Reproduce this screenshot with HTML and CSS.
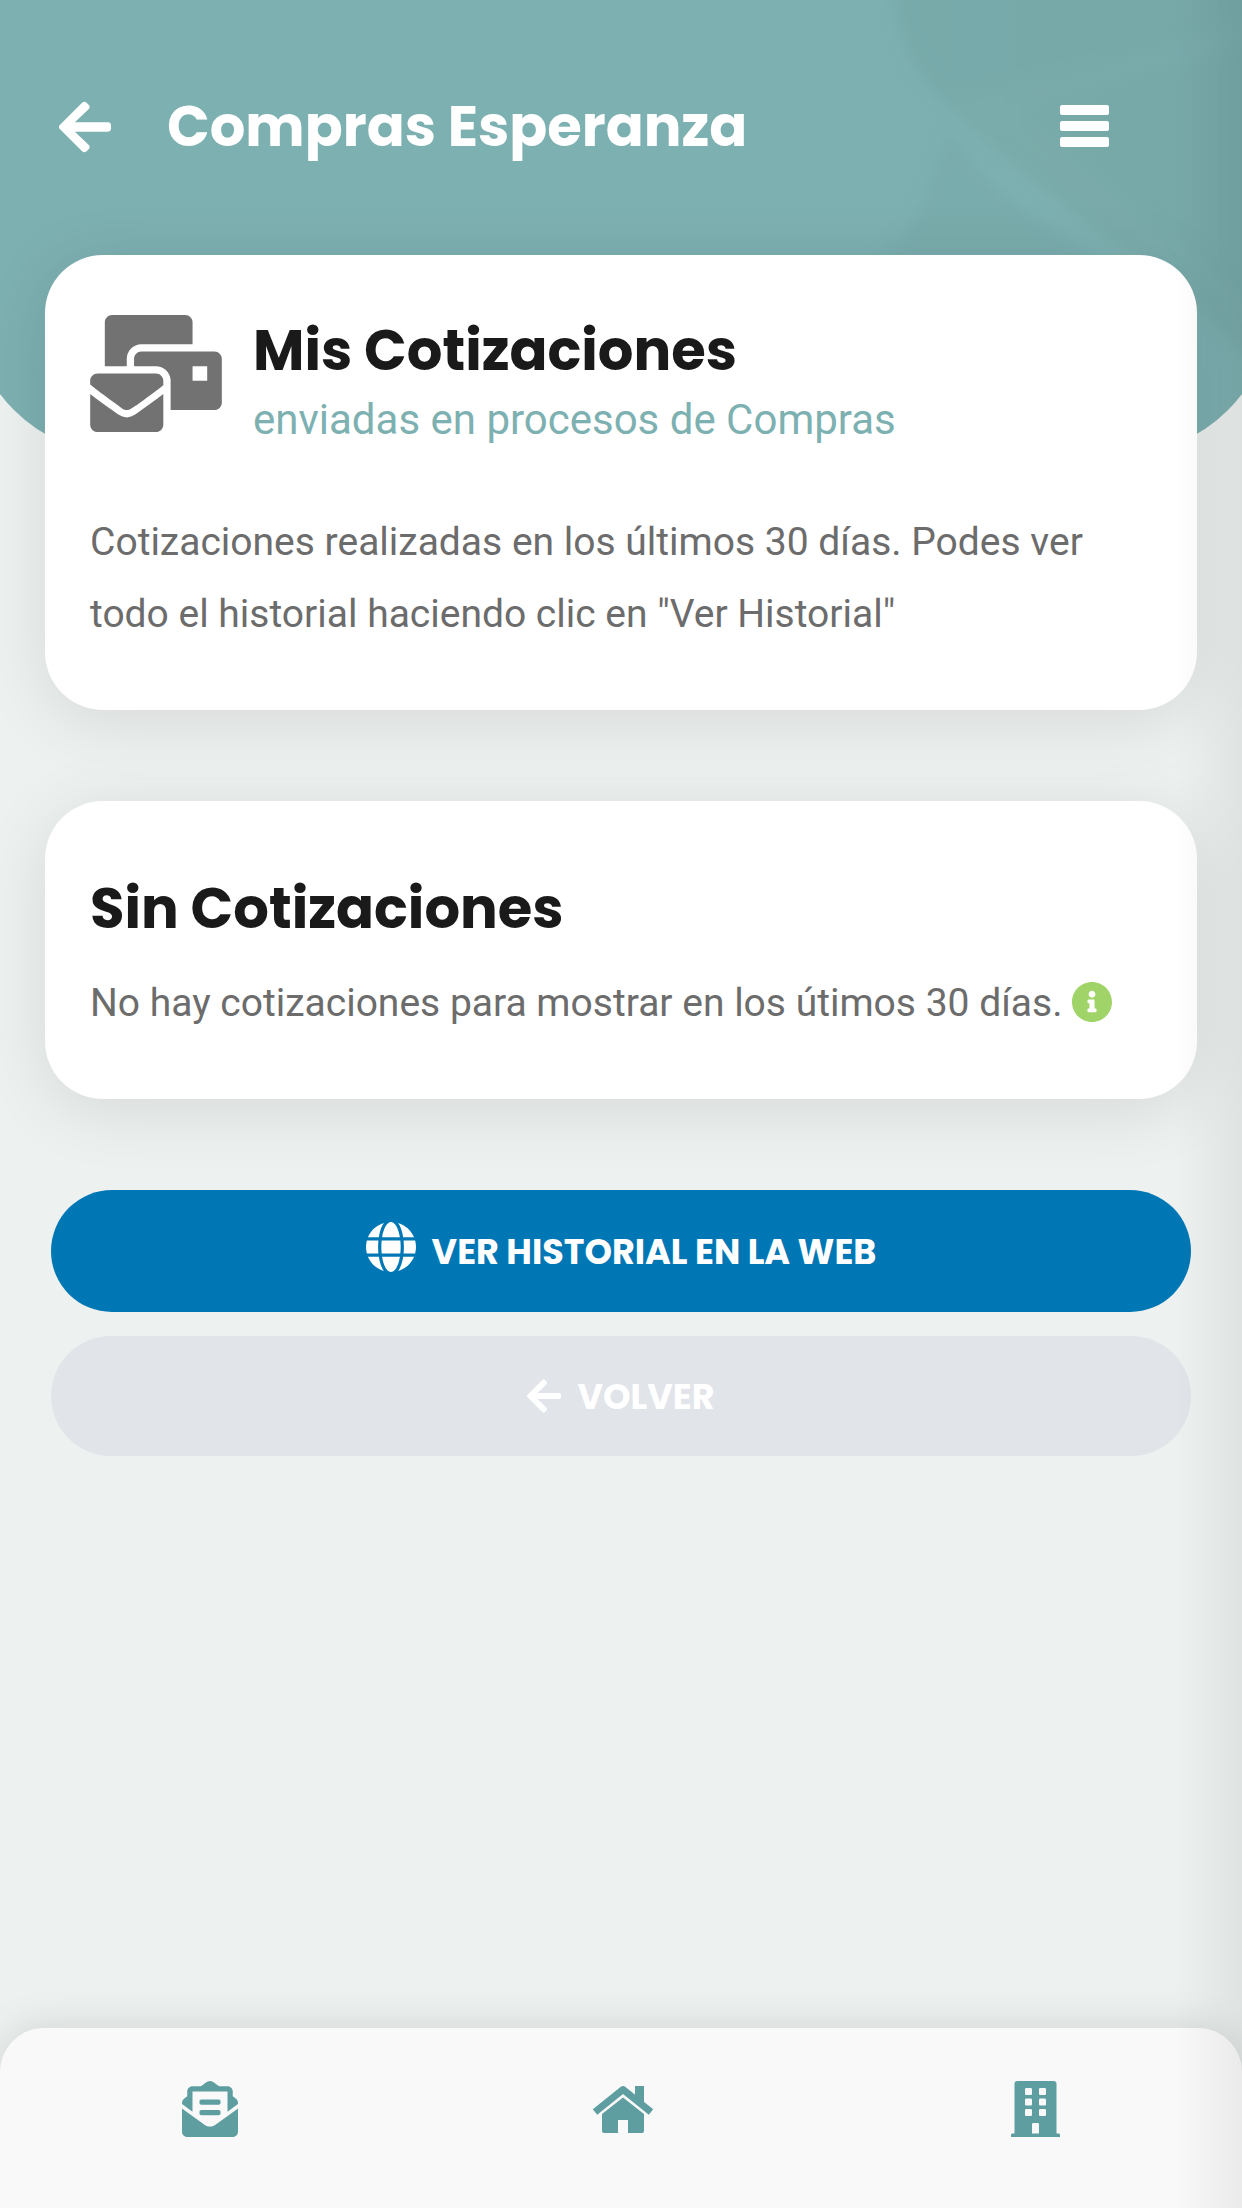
FILE: index.html
```html
<!DOCTYPE html>
<html lang="es">
<head>
<meta charset="utf-8">
<meta name="viewport" content="width=device-width, initial-scale=1">
<title>Compras Esperanza</title>
<link rel="stylesheet" href="styles.css">
</head>
<body>
<div class="page">
  <div class="hero" aria-hidden="true">
    <svg class="hero-art" viewBox="0 0 1302 454" preserveAspectRatio="none">
      <defs>
        <linearGradient id="edge" x1="0" x2="1"><stop offset="0" stop-color="#76a8a7"/><stop offset="1" stop-color="#74a5a4"/></linearGradient>
        <filter id="soft" x="-10%" y="-10%" width="120%" height="120%"><feGaussianBlur stdDeviation="7"/></filter>
      </defs>
      <g filter="url(#soft)">
        <path d="M922 -20C926 40 945 80 985 110C1040 165 1100 215 1180 265L1330 400V-20Z" fill="url(#edge)" opacity=".75"/>
        <path d="M980 95L1100 70L1302 10V40L1060 110L1302 320V350C1180 290 1080 230 980 95Z" fill="#7db0b0" opacity=".3"/>
        <path d="M980 130C1010 190 1070 220 1130 260H900C950 240 960 180 980 130Z" fill="#719f9e" opacity=".25"/>
      </g>
    </svg>
  </div>

  <header class="topbar">
    <a class="back" href="#" aria-label="Volver">
      <svg viewBox="0 0 448 512"><use href="#arrow"/></svg>
    </a>
    <h1 class="title">Compras Esperanza</h1>
    <button class="menu" type="button" aria-label="Menú">
      <svg viewBox="0 0 49 43"><rect width="49" height="10" rx="2"/><rect y="16" width="49" height="10" rx="2"/><rect y="32" width="49" height="10" rx="2"/></svg>
    </button>
  </header>

  <main class="content">
    <section class="card">
      <div class="card-head">
        <svg class="mail" viewBox="0 0 576 512"><path d="M160 448c-25.600 0-51.200-22.400-64-32-64-44.800-83.200-60.800-96-70.400V480c0 17.670 14.330 32 32 32h256c17.670 0 32-14.330 32-32V345.600c-12.800 9.600-32 25.600-96 70.400-12.800 9.600-38.400 32-64 32zm128-192H32c-17.670 0-32 14.330-32 32v16c25.600 19.200 22.400 19.200 115.200 86.400 9.600 6.400 28.800 25.600 44.800 25.600s35.200-19.200 44.800-22.400c92.800-67.200 89.600-67.200 115.200-86.400V288c0-17.670-14.330-32-32-32zm256-96H224c-17.670 0-32 14.330-32 32v32h96c33.210 0 60.590 25.420 63.710 57.820l.29-.22V416h192c17.670 0 32-14.330 32-32V192c0-17.670-14.330-32-32-32zm-32 128h-64v-64h64v64zm-352-96c0-35.290 28.710-64 64-64h224V32c0-17.670-14.330-32-32-32H96C78.330 0 64 14.330 64 32v192h96v-32z"/></svg>
        <div>
          <h2 class="heading">Mis Cotizaciones</h2>
          <p class="subheading">enviadas en procesos de Compras</p>
        </div>
      </div>
      <p class="text">Cotizaciones realizadas en los últimos 30 días. Podes ver todo el historial haciendo clic en "Ver Historial"</p>
    </section>

    <section class="card card-empty">
      <h2 class="heading">Sin Cotizaciones</h2>
      <p class="text">No hay cotizaciones para mostrar en los útimos 30 días. <svg class="info" viewBox="8 8 496 496"><path d="M256 8C119.043 8 8 119.083 8 256c0 136.997 111.043 248 248 248s248-111.003 248-248C504 119.083 392.957 8 256 8zm0 110c23.196 0 42 18.804 42 42s-18.804 42-42 42-42-18.804-42-42 18.804-42 42-42zm56 254c0 6.627-5.373 12-12 12h-88c-6.627 0-12-5.373-12-12v-24c0-6.627 5.373-12 12-12h12v-64h-12c-6.627 0-12-5.373-12-12v-24c0-6.627 5.373-12 12-12h64c6.627 0 12 5.373 12 12v100h12c6.627 0 12 5.373 12 12v24z"/></svg></p>
    </section>

    <div class="actions">
      <a class="btn btn-primary" href="#">
        <svg class="globe" viewBox="0 8 496 496"><path d="M336.500 160C322 70.700 287.800 8 248 8s-74 62.700-88.500 152h177zM152 256c0 22.200 1.200 43.500 3.300 64h185.300c2.100-20.500 3.300-41.800 3.300-64s-1.200-43.500-3.300-64H155.300c-2.100 20.500-3.300 41.800-3.300 64zm324.700-96c-28.600-67.900-86.500-120.400-158-141.600 24.400 33.800 41.200 84.700 50 141.600h108zM177.200 18.400C105.800 39.600 47.800 92.100 19.300 160h108c8.700-56.900 25.500-107.800 49.900-141.600zM487.400 192H372.700c2.100 21 3.300 42.500 3.300 64s-1.200 43-3.300 64h114.600c5.500-20.500 8.600-41.800 8.600-64s-3.100-43.500-8.500-64zM120 256c0-21.500 1.200-43 3.300-64H8.600C3.200 212.500 0 233.800 0 256s3.200 43.500 8.600 64h114.600c-2-21-3.200-42.500-3.200-64zm39.500 96c14.500 89.300 48.700 152 88.500 152s74-62.700 88.500-152h-177zm159.300 141.600c71.400-21.200 129.400-73.700 158-141.600h-108c-8.800 56.900-25.600 107.800-50 141.600zM19.300 352c28.600 67.900 86.500 120.400 158 141.600-24.400-33.800-41.200-84.700-50-141.600h-108z"/></svg>
        <span>VER HISTORIAL EN LA WEB</span>
      </a>
      <button class="btn btn-muted" type="button">
        <svg class="arrow" viewBox="0 0 448 512"><path id="arrow" d="M257.500 445.100l-22.200 22.200c-9.400 9.400-24.600 9.400-33.900 0L7 273c-9.400-9.400-9.400-24.600 0-33.900L201.400 44.700c9.400-9.400 24.600-9.400 33.900 0l22.200 22.200c9.500 9.500 9.300 25-.4 34.300L136.600 216H424c13.300 0 24 10.700 24 24v32c0 13.300-10.700 24-24 24H136.600l120.500 114.800c9.800 9.300 10 24.800.4 34.300z"/></svg>
        <span>VOLVER</span>
      </button>
    </div>
  </main>

  <nav class="tabbar">
    <a href="#" aria-label="Cotizaciones">
      <svg viewBox="0 0 512 512"><path d="M176 216h160c8.840 0 16-7.160 16-16v-16c0-8.840-7.160-16-16-16H176c-8.840 0-16 7.160-16 16v16c0 8.840 7.160 16 16 16zm-16 80c0 8.840 7.160 16 16 16h160c8.840 0 16-7.160 16-16v-16c0-8.840-7.160-16-16-16H176c-8.840 0-16 7.160-16 16v16zm96 121.130c-16.420 0-32.840-5.060-46.860-15.190L0 250.860V464c0 26.510 21.490 48 48 48h416c26.510 0 48-21.490 48-48V250.860L302.860 401.940c-14.020 10.120-30.440 15.190-46.860 15.190zm237.610-254.180c-8.850-6.940-17.240-13.470-29.610-22.810V96c0-26.510-21.490-48-48-48h-77.550c-3.040-2.200-5.870-4.260-9.040-6.560C312.600 29.170 279.200-.35 256 0c-23.200-.35-56.590 29.170-73.410 41.440-3.170 2.300-6 4.360-9.040 6.560H96c-26.510 0-48 21.490-48 48v44.140c-12.370 9.330-20.760 15.870-29.610 22.810A47.995 47.995 0 0 0 0 200.720v10.650l96 69.350V96h320v184.720l96-69.350v-10.650c0-14.740-6.780-28.670-18.390-37.770z"/></svg>
    </a>
    <a href="#" aria-label="Inicio">
      <svg class="home" viewBox="0 0 62 48"><path d="M3 27L31 4.500L59 27" fill="none" stroke="currentColor" stroke-width="7" stroke-linejoin="round"/><path d="M43 1h9v19l-9-7zM10 29L31 12.500L52 29V46q0 2-2 2H36V35H26V48H12q-2 0-2-2z"/></svg>
    </a>
    <a href="#" aria-label="Empresa">
      <svg class="building" viewBox="0 0 448 512"><path d="M436 480h-20V24c0-13.255-10.745-24-24-24H56C42.745 0 32 10.745 32 24v456H12c-6.627 0-12 5.373-12 12v20h448v-20c0-6.627-5.373-12-12-12zM128 76c0-6.627 5.373-12 12-12h40c6.627 0 12 5.373 12 12v40c0 6.627-5.373 12-12 12h-40c-6.627 0-12-5.373-12-12V76zm0 96c0-6.627 5.373-12 12-12h40c6.627 0 12 5.373 12 12v40c0 6.627-5.373 12-12 12h-40c-6.627 0-12-5.373-12-12v-40zm52 148h-40c-6.627 0-12-5.373-12-12v-40c0-6.627 5.373-12 12-12h40c6.627 0 12 5.373 12 12v40c0 6.627-5.373 12-12 12zm76 160h-64v-84c0-6.627 5.373-12 12-12h40c6.627 0 12 5.373 12 12v84zm64-172c0 6.627-5.373 12-12 12h-40c-6.627 0-12-5.373-12-12v-40c0-6.627 5.373-12 12-12h40c6.627 0 12 5.373 12 12v40zm0-96c0 6.627-5.373 12-12 12h-40c-6.627 0-12-5.373-12-12v-40c0-6.627 5.373-12 12-12h40c6.627 0 12 5.373 12 12v40zm0-96c0 6.627-5.373 12-12 12h-40c-6.627 0-12-5.373-12-12V76c0-6.627 5.373-12 12-12h40c6.627 0 12 5.373 12 12v40z"/></svg>
    </a>
  </nav>
</div>
</body>
</html>
```

FILE: styles.css
```css
* {
  box-sizing: border-box;
}

body {
  margin: 0;
  background: #edf1f0;
  font-family: Roboto, "Liberation Sans", sans-serif;
  color: #6c6c6c;
}

h1, h2, p {
  margin: 0;
}

svg {
  display: block;
  fill: currentColor;
}

a {
  color: inherit;
  text-decoration: none;
}

.page {
  position: relative;
  display: flex;
  flex-direction: column;
  min-height: 100vh;
  overflow: hidden;
}

.page::after {
  content: "";
  position: absolute;
  top: 0;
  right: 0;
  bottom: 0;
  width: 68px;
  background: linear-gradient(to right, rgba(0, 0, 0, 0), rgba(0, 0, 0, 0.06));
  pointer-events: none;
}

.hero {
  position: absolute;
  top: 0;
  left: -30px;
  right: -30px;
  height: 454px;
  border-radius: 0 0 150px 150px;
  background: #7db0b1;
  overflow: hidden;
}

.hero-art {
  width: 100%;
  height: 100%;
}

.topbar {
  position: relative;
  display: flex;
  align-items: center;
  height: 255px;
  padding: 0 133px 2px 59px;
  color: #fff;
}

.back svg {
  width: 52px;
  height: 60px;
}

.title,
.heading,
.btn {
  font-family: Poppins, Inter, "Liberation Sans", sans-serif;
}

.title,
.heading {
  font-size: 56px;
  font-weight: 700;
  line-height: 72px;
}

.title {
  flex: 1;
  margin-left: 56px;
}

.menu {
  padding: 0;
  border: 0;
  background: none;
  color: inherit;
}

.menu svg {
  width: 49px;
  height: 43px;
}

.content {
  position: relative;
  flex: 1;
  padding: 0 45px;
}

.card {
  margin-bottom: 91px;
  padding: 60px 45px;
  border-radius: 58px;
  background: #fff;
  box-shadow: 0 11px 68px rgba(0, 0, 0, 0.1);
}

.card-head {
  display: flex;
  gap: 31px;
  margin-bottom: 53px;
}

.mail {
  width: 132px;
  height: 117px;
  color: #727272;
}

.heading {
  color: #1a1a1a;
}

.subheading {
  color: #7db0b1;
  font-size: 42px;
  line-height: 66px;
}

.text {
  font-size: 39px;
  line-height: 72px;
}

.card-empty {
  padding-top: 72px;
}

.card-empty .text {
  margin-top: 22px;
}

.info {
  display: inline-block;
  width: 40px;
  height: 40px;
  vertical-align: -6px;
  color: #a0d468;
}

.actions {
  display: grid;
  gap: 24px;
  padding: 0 6px;
}

.btn {
  display: flex;
  align-items: center;
  justify-content: center;
  gap: 16px;
  min-height: 120px;
  border: 0;
  border-radius: 61px;
  color: #fff;
  font-size: 35px;
  font-weight: 700;
}

.btn-primary {
  min-height: 122px;
  background: #0077b5;
}

.btn-muted {
  background: #e1e4e9;
}

.globe {
  width: 50px;
  height: 50px;
  margin-bottom: 8px;
}

.arrow {
  width: 34px;
  height: 40px;
}

.tabbar {
  position: relative;
  display: grid;
  grid-template-columns: repeat(3, 1fr);
  align-items: center;
  justify-items: center;
  height: 180px;
  padding: 0 0 18px 3px;
  border-radius: 44px 44px 0 0;
  background: #f9f9f9;
  box-shadow: 0 0 40px rgba(0, 0, 0, 0.13);
  color: #5f9ea0;
}

.tabbar svg {
  width: 56px;
  height: 56px;
}

.tabbar .home {
  width: 62px;
  height: 48px;
}

.tabbar .building {
  width: 49px;
}
```
